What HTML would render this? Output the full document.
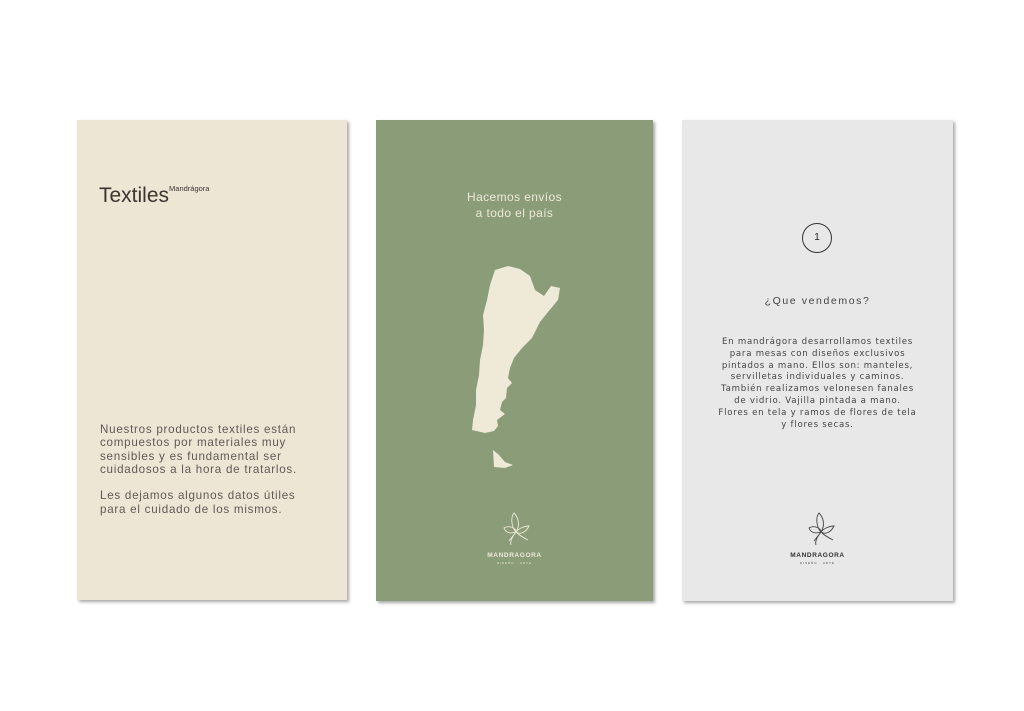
<!DOCTYPE html>
<html><head><meta charset="utf-8"><style>
body{margin:0;width:1024px;height:711px;background:#fff;position:relative;overflow:hidden;font-family:"Liberation Sans",sans-serif}
.card{position:absolute;top:120px;box-shadow:2px 2px 3px rgba(0,0,0,.35)}
.c1{left:77px;width:270px;height:480px;background:#ede6d5}
.c2{left:376px;width:277px;height:481px;background:#8a9c78}
.c3{left:682px;width:271px;height:481px;background:#e9e8e8}
.t{position:absolute;white-space:nowrap}
</style></head><body>
<div class="card c1">
 <div class="t" style="left:22px;top:64px;font-size:21px;color:#3a3530">Textiles<span style="font-size:7.5px;vertical-align:11px">Mandrágora</span></div>
 <div class="t" style="left:23px;top:303px;font-size:11.6px;line-height:13.3px;letter-spacing:.75px;color:#5e5a55">Nuestros productos textiles están<br>compuestos por materiales muy<br>sensibles y es fundamental ser<br>cuidadosos a la hora de tratarlos.<br><br>Les dejamos algunos datos útiles<br>para el cuidado de los mismos.</div>
</div>
<div class="card c2">
 <div class="t" style="left:0;width:277px;text-align:center;top:70px;font-size:12px;line-height:15.5px;letter-spacing:.4px;color:#efe9d8">Hacemos envíos<br>a todo el país</div>
 <svg style="position:absolute;left:0;top:0" width="277" height="481" viewBox="376 120 277 481">
  <path fill="#efe9d8" d="M495,270 L508,266 L520,269 L530,276 L535,290 L544,296 L551,286 L560,288 L558,300 L548,312 L540,322 L532,338 L522,348 L514,358 L510,368 L508,378 L512,383 L507,388 L506,398 L502,402 L500,410 L505,414 L497,420 L498,426 L494,431 L485,433 L472,430 L473,420 L476,405 L476,390 L479,375 L480,360 L483,345 L484,330 L483,315 L487,300 L490,285 Z M493,450 L499,455 L505,462 L513,465 L505,468 L494,467 Z"/>
  <g fill="none" stroke="#efe9d8" stroke-width="0.9">
   <path d="M514,513 C510,518 512,528 516,532 C520,526 519,518 514,513Z M504,528 C509,525 516,528 516,532 C510,534 506,533 504,528Z M529,526 C524,526 518,529 516,532 C521,535 526,532 529,526Z M516,532 C512,537 510,542 511,545 M516,532 C520,536 524,538 528,540 M516,532 L509,541"/>
  </g>
 </svg>
 <div class="t" style="left:0;width:277px;text-align:center;top:432px;font-size:6.5px;font-weight:bold;letter-spacing:.6px;color:#efe9d8">MANDRAGORA</div>
 <div class="t" style="left:0;width:277px;text-align:center;top:441px;font-size:3px;letter-spacing:1px;color:#efe9d8">DISEÑO · ARTE</div>
</div>
<div class="card c3">
 <div style="position:absolute;left:120px;top:103px;width:28px;height:28px;border:1.2px solid #333;border-radius:50%;text-align:center;line-height:28px;font-size:10px;color:#222">1</div>
 <div class="t" style="left:0;width:271px;text-align:center;top:175px;font-size:10.5px;letter-spacing:1.6px;color:#444">¿Que vendemos?</div>
 <div class="t" style="left:0;width:271px;text-align:center;top:217px;font-family:'DejaVu Sans',sans-serif;font-size:8.6px;line-height:11.8px;letter-spacing:.75px;color:#444">En mandrágora desarrollamos textiles<br>para mesas con diseños exclusivos<br>pintados a mano. Ellos son: manteles,<br>servilletas individuales y caminos.<br>También realizamos velonesen fanales<br>de vidrio. Vajilla pintada a mano.<br>Flores en tela y ramos de flores de tela<br>y flores secas.</div>
 <svg style="position:absolute;left:0;top:0" width="271" height="481" viewBox="682 120 271 481">
  <g fill="none" stroke="#444" stroke-width="0.9" transform="translate(305,0)">
   <path d="M514,513 C510,518 512,528 516,532 C520,526 519,518 514,513Z M504,528 C509,525 516,528 516,532 C510,534 506,533 504,528Z M529,526 C524,526 518,529 516,532 C521,535 526,532 529,526Z M516,532 C512,537 510,542 511,545 M516,532 C520,536 524,538 528,540 M516,532 L509,541"/>
  </g>
 </svg>
 <div class="t" style="left:0;width:271px;text-align:center;top:432px;font-size:6.5px;font-weight:bold;letter-spacing:.6px;color:#333">MANDRAGORA</div>
 <div class="t" style="left:0;width:271px;text-align:center;top:441px;font-size:3px;letter-spacing:1px;color:#444">DISEÑO · ARTE</div>
</div>
</body></html>
